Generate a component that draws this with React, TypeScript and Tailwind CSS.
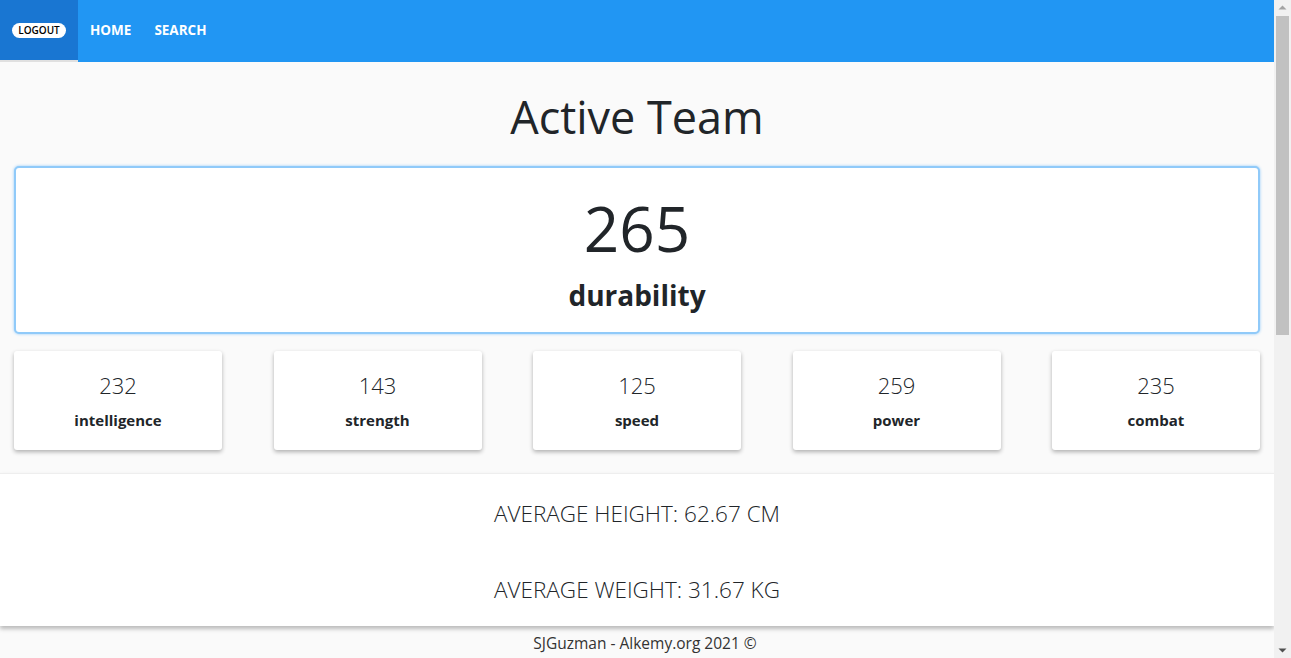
const stats = [
  { value: 232, name: "intelligence" },
  { value: 143, name: "strength" },
  { value: 125, name: "speed" },
  { value: 259, name: "power" },
  { value: 235, name: "combat" }
];

const Scrollbar = () => (
  <div className="flex h-full w-[17px] shrink-0 flex-col items-center bg-[#f1f1f1]">
    <svg width="17" height="16" viewBox="0 0 17 16">
      <path d="M4.5 9.5 L8.5 5.5 L12.5 9.5 Z" fill="#a3a3a3" />
    </svg>
    <div className="h-[319px] w-[13px] bg-[#c1c1c1]" />
    <div className="flex-1" />
    <svg width="17" height="16" viewBox="0 0 17 16">
      <path d="M4.5 6.5 L8.5 10.5 L12.5 6.5 Z" fill="#505050" />
    </svg>
  </div>
);

const App = () => {
  return (
    <div className="flex h-[658px] overflow-hidden" style={{ fontFamily: '"Open Sans", sans-serif' }}>
      <main className="flex-1 overflow-hidden bg-[#fafafa] text-[#212529]">
        {/* navbar */}
        <nav className="flex h-[62px] bg-[#2196f3] text-white">
          <div className="flex w-[78px] items-center justify-center border-b-2 border-[#e0e0e0] bg-[#1976d2]">
            <button className="rounded-full bg-white px-[6px] text-[10px] leading-[15px] font-semibold text-black">LOGOUT</button>
          </div>
          <a className="flex items-center border-b-2 border-transparent pl-3 pr-[11px] text-[13.5px] font-bold">HOME</a>
          <a className="flex items-center border-b-2 border-transparent px-3 text-[13.5px] font-bold">SEARCH</a>
        </nav>

        <h1 className="mt-[24px] mb-[18px] text-center text-[45px] leading-[62px] font-normal">Active Team</h1>

        <div className="px-[14px]">
          <div className="flex h-[168px] flex-col items-center justify-center rounded-[5px] border-2 border-[#90caf9] bg-white shadow-[0_0_3px_#90caf9]">
            <div className="mt-[2px] text-[62px] leading-[78px] font-normal">265</div>
            <div className="mt-[9px] text-[28px] leading-[38px] font-bold">durability</div>
          </div>

          <div className="mt-[17px] flex justify-between">
            {stats.map((stat) => (
              <div
                key={stat.name}
                className="flex h-[99px] w-[208px] flex-col items-center justify-center rounded-[3px] bg-white shadow-[0_2px_4px_rgba(0,0,0,0.3)]"
              >
                <div className="text-[22px] leading-[30px] font-light">{stat.value}</div>
                <div className="mt-[9px] text-[15px] leading-[22px] font-bold">{stat.name}</div>
              </div>
            ))}
          </div>
        </div>

        <section className="mt-[23px] flex h-[153px] flex-col items-center border-t border-[#eeeeee] bg-white shadow-[0_3px_4px_rgba(0,0,0,0.25)]">
          <p className="mt-[25px] text-[22.5px] leading-[30px] font-light">AVERAGE HEIGHT: 62.67 CM</p>
          <p className="mt-[46px] text-[22.5px] leading-[30px] font-light">AVERAGE WEIGHT: 31.67 KG</p>
        </section>

        <footer className="mt-[7px] pl-[16px] text-center text-[15.5px] leading-[20px] text-[#333333]">SJGuzman - Alkemy.org 2021 ©</footer>
      </main>
      <Scrollbar />
    </div>
  );
};

export default App;
